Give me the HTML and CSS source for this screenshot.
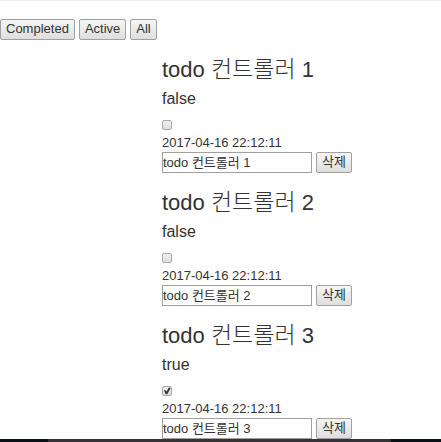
FILE: index.html
```html
<!DOCTYPE html>
<html lang="ko">
<head>
<meta charset="utf-8">
<title>todo</title>
<link rel="stylesheet" href="styles.css">
</head>
<body>
<nav class="filters">
  <button type="button" class="btn">Completed</button>
  <button type="button" class="btn">Active</button>
  <button type="button" class="btn">All</button>
</nav>
<main class="todos">
  <article class="todo">
    <h2 class="title">todo <span class="hangul">컨트롤러</span> 1</h2>
    <p class="state">false</p>
    <input class="check" type="checkbox" aria-label="todo 컨트롤러 1">
    <time class="date">2017-04-16 22:12:11</time>
    <div class="edit">
      <input class="field" type="text" value="todo 컨트롤러 1" aria-label="todo 1">
      <button type="button" class="btn">삭제</button>
    </div>
  </article>
  <article class="todo">
    <h2 class="title">todo <span class="hangul">컨트롤러</span> 2</h2>
    <p class="state">false</p>
    <input class="check" type="checkbox" aria-label="todo 컨트롤러 2">
    <time class="date">2017-04-16 22:12:11</time>
    <div class="edit">
      <input class="field" type="text" value="todo 컨트롤러 2" aria-label="todo 2">
      <button type="button" class="btn">삭제</button>
    </div>
  </article>
  <article class="todo">
    <h2 class="title">todo <span class="hangul">컨트롤러</span> 3</h2>
    <p class="state">true</p>
    <input class="check" type="checkbox" aria-label="todo 컨트롤러 3" checked>
    <time class="date">2017-04-16 22:12:11</time>
    <div class="edit">
      <input class="field" type="text" value="todo 컨트롤러 3" aria-label="todo 3">
      <button type="button" class="btn">삭제</button>
    </div>
  </article>
</main>
<div class="taskbar"><span class="taskbar-active"></span></div>
</body>
</html>
```

FILE: styles.css
```css
* {
  box-sizing: border-box;
}

html {
  overflow: hidden;
}

body {
  margin: 0;
  border-top: 1px solid #eee;
  background: #fff;
  color: #333;
  font: 400 13px/18px "Liberation Sans", "Noto Sans CJK KR", sans-serif;
}

.filters {
  display: flex;
  gap: 4px;
  padding-top: 18px;
}

.btn {
  height: 21px;
  padding: 0 5px 2px;
  border: 1px solid #a0a0a0;
  border-radius: 2px;
  background: linear-gradient(#f6f6f6, #dedede);
  color: #333;
  font: inherit;
  line-height: 17px;
  white-space: nowrap;
}

.todos {
  display: flex;
  flex-direction: column;
  gap: 15px;
  padding: 15px 0 0 162px;
}

.todo {
  display: flex;
  flex-direction: column;
  align-items: flex-start;
}

.title {
  margin: 0;
  font-size: 22px;
  font-weight: 300;
  line-height: 29px;
}

.hangul {
  font-size: 23px;
  line-height: 1;
}

.state {
  margin: 0;
  font-size: 16px;
  line-height: 29px;
}

.check {
  appearance: none;
  width: 10px;
  height: 10px;
  margin: 7px 0 4px;
  border: 1px solid #aaa;
  border-radius: 2px;
  background: linear-gradient(#eee, #dedede);
}

.check:checked {
  display: grid;
  place-items: center;
}

.check:checked::before {
  content: "";
  width: 8px;
  height: 8px;
  background: #333;
  clip-path: polygon(12% 44%, 30% 38%, 42% 58%, 76% 4%, 96% 16%, 52% 92%, 34% 92%);
}

.edit {
  display: flex;
  gap: 4px;
}

.field {
  width: 150px;
  height: 21px;
  padding: 0 0 3px;
  border: 1px solid #a0a0a0;
  background: #fff;
  color: #333;
  font: inherit;
  line-height: 16px;
}

.taskbar {
  position: fixed;
  right: 0;
  bottom: 0;
  left: 0;
  height: 3px;
  padding: 0 50px 0 48px;
  background: #081216;
}

.taskbar-active {
  display: block;
  height: 100%;
  background: #353336;
}
```
